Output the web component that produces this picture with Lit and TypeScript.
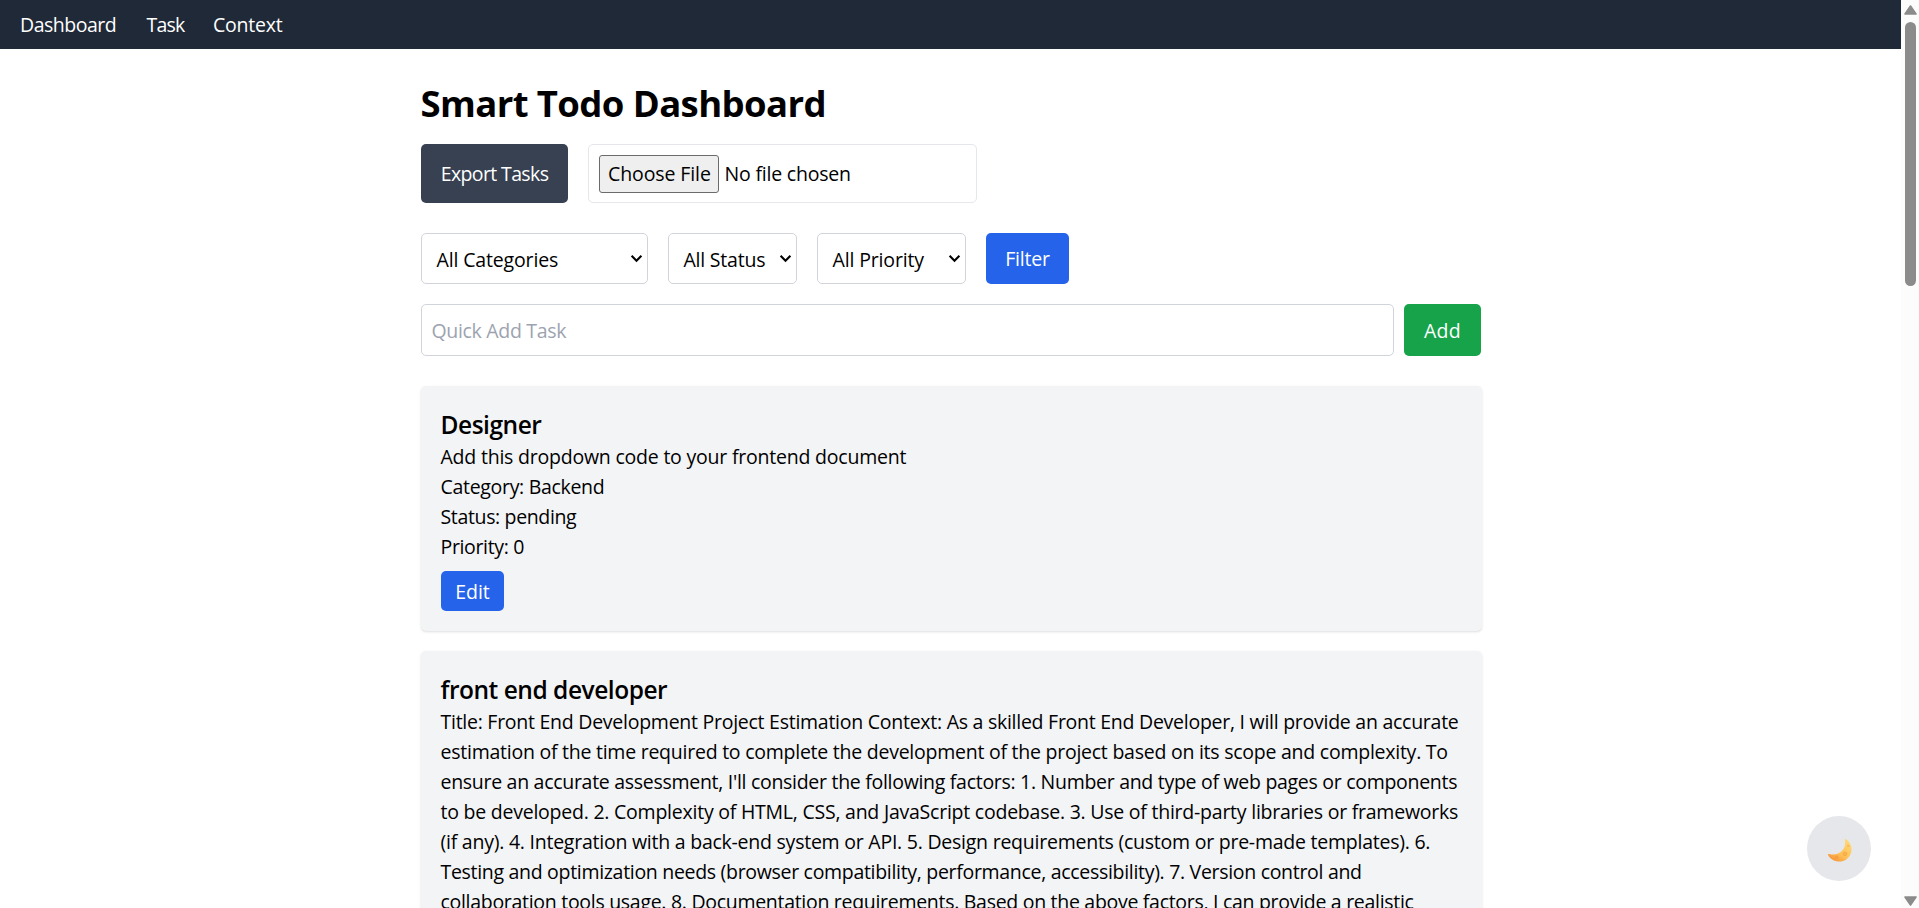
import { LitElement, html, css, nothing } from 'lit';
import { customElement } from 'lit/decorators.js';

type Line = [text: string, tracking: number];

interface Task {
  title: Line;
  description: Line[];
  meta: Line[];
}

const tasks: Task[] = [
  {
    title: ['Designer', -0.47],
    description: [['Add this dropdown code to your frontend document', -0.215]],
    meta: [
      ['Category: Backend', -0.31],
      ['Status: pending', -0.35],
      ['Priority: 0', -0.346],
    ],
  },
  {
    title: ['front end developer', -0.47],
    description: [
      ['Title: Front End Development Project Estimation Context: As a skilled Front End Developer, I will provide an accurate', -0.26],
      ['estimation of the time required to complete the development of the project based on its scope and complexity. To', -0.246],
      ["ensure an accurate assessment, I'll consider the following factors: 1. Number and type of web pages or components", -0.29],
      ['to be developed. 2. Complexity of HTML, CSS, and JavaScript codebase. 3. Use of third-party libraries or frameworks', -0.235],
      ['(if any). 4. Integration with a back-end system or API. 5. Design requirements (custom or pre-made templates). 6.', -0.24],
      ['Testing and optimization needs (browser compatibility, performance, accessibility). 7. Version control and', -0.305],
      ['collaboration tools usage. 8. Documentation requirements. Based on the above factors, I can provide a realistic', -0.293],
    ],
    meta: [],
  },
];

const tracked = ([text, tracking]: Line) =>
  html`<span style="letter-spacing:${tracking}px">${text}</span>`;

const chevron = html`<svg class="chevron" width="13" height="9" viewBox="0 0 13 9" fill="none">
  <path d="M1.6 1.8 6.5 6.7 11.4 1.8" stroke="#000" stroke-width="2.1" />
</svg>`;

@customElement('app-root')
export class AppRoot extends LitElement {
  static styles = css`
    :host {
      display: grid;
      grid-template-columns: minmax(0, 1fr) 18px;
      height: 100vh;
      overflow: hidden;
      background: #fff;
      color: #000;
      font: 400 19.5px/30px 'Open Sans', 'Noto Sans', sans-serif;
    }
    * { box-sizing: border-box; }
    span { white-space: nowrap; }
    .page { height: 100vh; overflow: hidden; }
    nav {
      display: flex;
      align-items: center;
      height: 49px;
      padding-left: 20px;
      background: #1f2937;
      color: #fff;
    }
    nav span:nth-child(1) { width: 126.5px; }
    nav span:nth-child(2) { width: 66.5px; }
    main { width: 1061px; margin-left: 420.5px; padding-top: 30px; }
    h1 {
      margin: 0;
      height: 65px;
      padding-top: 2px;
      font-size: 36.5px;
      font-weight: 700;
      line-height: 45px;
    }
    .row { display: flex; }
    .files { gap: 20px; height: 59px; }
    .btn {
      display: flex;
      align-items: center;
      justify-content: center;
      padding-left: 1px;
      border-radius: 5px;
      color: #fff;
    }
    .export { width: 147px; background: #374151; }
    .picker {
      display: flex;
      align-items: center;
      gap: 5.5px;
      width: 389px;
      padding-left: 10px;
      border: 1px solid #e5e7eb;
      border-radius: 5px;
    }
    .choose {
      width: 120.5px;
      height: 38px;
      padding: 3px 0 0 8.5px;
      border: 1px solid #6b6b6b;
      border-radius: 3px;
      background: #efefef;
    }
    .chosen { padding-top: 1px; }
    .filters { gap: 20px; height: 51px; margin-top: 30px; }
    .select {
      display: flex;
      align-items: center;
      justify-content: space-between;
      padding: 2px 3.5px 0 15px;
      border: 1px solid #d1d5db;
      border-radius: 5px;
    }
    .chevron { margin-top: -3px; flex: none; }
    .categories { width: 227px; }
    .status { width: 129px; }
    .priority { width: 149px; }
    .filter { width: 83px; background: #2563eb; }
    .quick { gap: 10px; height: 52px; margin-top: 20px; }
    .entry {
      display: flex;
      align-items: center;
      width: 973px;
      padding: 1px 0 0 10px;
      border: 1px solid #d1d5db;
      border-radius: 5px;
      color: #9ca3af;
    }
    .add { width: 77px; background: #16a34a; padding-top: 1px; }
    .tasks { display: flex; flex-direction: column; gap: 20px; margin-top: 30px; }
    .card {
      padding: 21px 20px 20px;
      border-radius: 5px;
      background: #f3f4f6;
      box-shadow: 0 1px 3px rgba(0, 0, 0, 0.1), 0 1px 2px -1px rgba(0, 0, 0, 0.1);
    }
    h2 { margin: 0; font-size: 24.5px; font-weight: 600; line-height: 35px; }
    p { margin: 0; }
    p span { display: block; }
    .edit { width: 63px; height: 40px; margin-top: 9px; padding-top: 1px; background: #2563eb; }
    .theme {
      position: fixed;
      left: 1807px;
      top: 816px;
      display: grid;
      place-items: center;
      width: 64px;
      height: 65px;
      padding: 5px 0 0 2px;
      border-radius: 50%;
      background: #e5e7eb;
    }
    .scrollbar {
      display: flex;
      flex-direction: column;
      align-items: center;
      padding: 5px 0 2px 1px;
      background: #fcfcfc;
    }
    .thumb { width: 11px; height: 264px; margin: 7px 0 auto; border-radius: 6px; background: #8b8b8b; }
    .arrow { display: block; }
  `;

  render() {
    return html`
      <div class="page">
        <nav>
          ${tracked(['Dashboard', -0.5])}${tracked(['Task', -0.75])}${tracked(['Context', -0.22])}
        </nav>
        <main>
          <h1>${tracked(['Smart Todo Dashboard', -0.596])}</h1>
          <div class="row files">
            <div class="btn export">${tracked(['Export Tasks', -0.62])}</div>
            <div class="picker">
              <div class="choose">${tracked(['Choose File', -0.1])}</div>
              <div class="chosen">${tracked(['No file chosen', -0.2])}</div>
            </div>
          </div>
          <div class="row filters">
            <div class="select categories">${tracked(['All Categories', -0.15])}${chevron}</div>
            <div class="select status">${tracked(['All Status', -0.22])}${chevron}</div>
            <div class="select priority">${tracked(['All Priority', -0.15])}${chevron}</div>
            <div class="btn filter">${tracked(['Filter', -0.213])}</div>
          </div>
          <div class="row quick">
            <div class="entry">${tracked(['Quick Add Task', -0.32])}</div>
            <div class="btn add">${tracked(['Add', 0.2])}</div>
          </div>
          <div class="tasks">
            ${tasks.map(
              (task) => html`<section class="card">
                <h2>${tracked(task.title)}</h2>
                <p>${task.description.map(tracked)}</p>
                ${task.meta.length
                  ? html`<p>${task.meta.map(tracked)}</p>
                      <div class="btn edit">${tracked(['Edit', -0.035])}</div>`
                  : nothing}
              </section>`
            )}
          </div>
        </main>
      </div>
      <div class="scrollbar">
        <svg class="arrow" width="13" height="10" viewBox="0 0 13 10">
          <path d="M6.5 1 12 9H1Z" fill="#8b8b8b" stroke="#8b8b8b" stroke-width="1.6" stroke-linejoin="round" />
        </svg>
        <div class="thumb"></div>
        <svg class="arrow" width="13" height="10" viewBox="0 0 13 10">
          <path d="M6.5 9 12 1H1Z" fill="#8b8b8b" stroke="#8b8b8b" stroke-width="1.6" stroke-linejoin="round" />
        </svg>
      </div>
      <div class="theme">
        <svg width="36" height="36" viewBox="0 0 36 36">
          <defs>
            <linearGradient id="moon" x1="0.85" y1="0.1" x2="0.25" y2="1">
              <stop offset="0" stop-color="#ffd773" />
              <stop offset="0.6" stop-color="#ffc057" />
              <stop offset="1" stop-color="#f79438" />
            </linearGradient>
          </defs>
          <path
            d="M23.8 6.2C28 8.800 30.4 13.800 29.200 19.200C27.400 26 21.200 29.400 14.800 28.300C10.800 27.500 7.600 25.400 6 22C5.700 21.200 6.300 20.800 7 21C12.500 22.600 17.600 20.900 20.700 17.100C23.200 13.800 23.600 10.800 22.800 6.900C22.600 6.100 23.200 5.800 23.800 6.200Z"
            fill="url(#moon)"
          />
          <circle cx="23" cy="20.800" r="1.900" fill="#fbb24c" stroke="#eda347" stroke-width="0.6" />
          <circle cx="14.600" cy="24.400" r="1.400" fill="#f9a342" stroke="#ea9440" stroke-width="0.5" />
          <circle cx="26.300" cy="12.900" r="1.200" fill="#f8bb55" />
        </svg>
      </div>
    `;
  }
}
